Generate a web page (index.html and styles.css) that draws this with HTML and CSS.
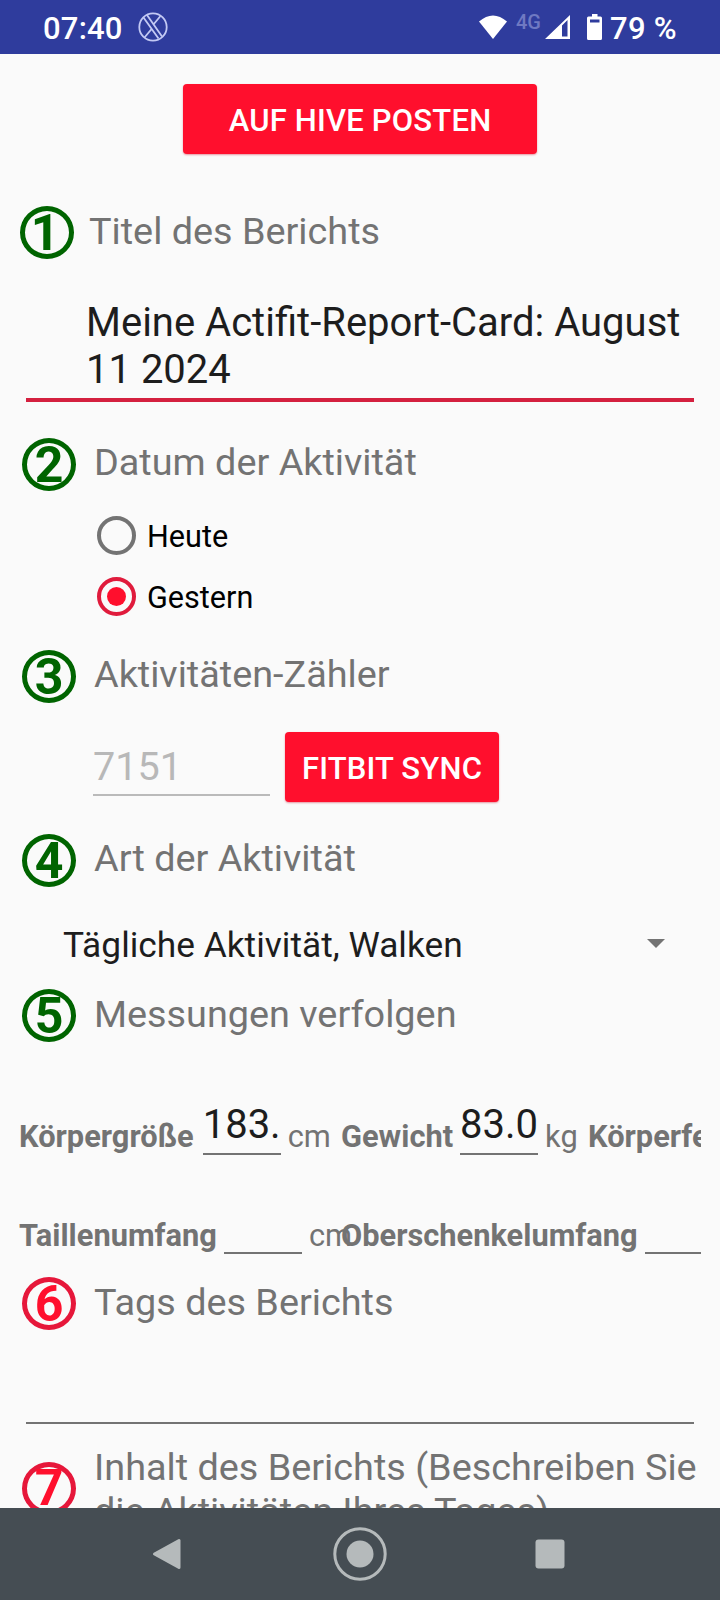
FILE: index.html
```html
<!DOCTYPE html>
<html lang="de">
<head>
    <meta charset="UTF-8">
    <meta name="viewport" content="width=device-width, initial-scale=1.0">
    <title>Actifit</title>
    <link rel="stylesheet" href="styles.css">
</head>
<body>
    <!-- Status bar -->
    <div class="status-bar">
        <span class="clock">07:40</span>
        <svg class="x-icon" width="30" height="30" viewBox="0 0 30 30" fill="none" stroke="#c3c9f4" stroke-width="1.8">
            <circle cx="15" cy="15" r="13.7"/>
            <path d="M5.5 5.5l15 21M9 3l15 21.5M22.5 4l-7.500 9M14 16.500L6.500 25.500"/>
        </svg>
        <svg class="wifi-icon" width="28" height="24" viewBox="0 0 28 24" fill="#fff">
            <path d="M0 6.500Q14-5.500 28 6.500L14 24z"/>
        </svg>
        <span class="network">4G</span>
        <svg class="signal-icon" width="25" height="24" viewBox="0 0 25 24">
            <path fill="#fff" fill-rule="evenodd" d="M0 24L25 0v24zM17 10.500V21.500h5.500V5z"/>
        </svg>
        <svg class="battery-icon" width="15" height="26" viewBox="0 0 15 26">
            <path fill="#fff" fill-rule="evenodd" d="M5 0h5.500v2.500h3q1.500 0 1.500 1.500v20.500q0 1.500-1.500 1.500h-12q-1.500 0-1.500-1.500V4q0-1.500 1.500-1.500H5zM3 5.500v3h9.500v-3z"/>
        </svg>
        <span class="battery">79 %</span>
    </div>

    <!-- Report form -->
    <div class="form">
        <button class="btn post-btn">AUF HIVE POSTEN</button>

        <div class="heading first">
            <span class="step">1</span>
            <span class="label">Titel des Berichts</span>
        </div>
        <div class="title-input">Meine Actifit-Report-Card: August 11 2024</div>

        <div class="heading">
            <span class="step">2</span>
            <span class="label">Datum der Aktivität</span>
        </div>
        <div class="radios">
            <div class="radio"><span class="dot"></span><span class="option">Heute</span></div>
            <div class="radio checked"><span class="dot"></span><span class="option">Gestern</span></div>
        </div>

        <div class="heading">
            <span class="step">3</span>
            <span class="label">Aktivitäten-Zähler</span>
        </div>
        <div class="counter">
            <div class="count-input">7151</div>
            <button class="btn sync-btn">FITBIT SYNC</button>
        </div>

        <div class="heading">
            <span class="step">4</span>
            <span class="label">Art der Aktivität</span>
        </div>
        <div class="spinner">
            <span class="spinner-text">Tägliche Aktivität, Walken</span>
            <span class="arrow"></span>
        </div>

        <div class="heading low">
            <span class="step">5</span>
            <span class="label">Messungen verfolgen</span>
        </div>
        <div class="measures">
            <div class="measure-row">
                <div class="measure height">
                    <b>Körpergröße</b><span class="value">183.</span><span>cm</span>
                </div>
                <div class="measure weight">
                    <b>Gewicht</b><span class="value">83.0</span><span>kg</span>
                </div>
                <div class="measure"><b>Körperfett</b></div>
            </div>
            <div class="measure-row">
                <div class="measure waist">
                    <b>Taillenumfang</b><span class="value"></span><span>cm</span>
                </div>
                <div class="measure">
                    <b>Oberschenkelumfang</b><span class="value"></span>
                </div>
            </div>
        </div>

        <div class="heading low">
            <span class="step red">6</span>
            <span class="label">Tags des Berichts</span>
        </div>
        <div class="tags-input"></div>

        <div class="heading content-heading">
            <span class="step red">7</span>
            <span class="label">Inhalt des Berichts (Beschreiben Sie die Aktivitäten Ihres Tages)</span>
        </div>
    </div>

    <!-- Navigation bar -->
    <div class="nav-bar">
        <svg width="54" height="54" viewBox="0 0 54 54">
            <path fill="#b5babb" stroke="#b5babb" stroke-width="3" stroke-linejoin="round" d="M11.500 27L36 13.500v27z"/>
        </svg>
        <svg width="54" height="54" viewBox="0 0 54 54">
            <circle cx="27" cy="27" r="25.200" fill="none" stroke="#b5babb" stroke-width="3"/>
            <circle cx="27" cy="27" r="13.500" fill="#b5babb"/>
        </svg>
        <svg width="54" height="54" viewBox="0 0 54 54">
            <rect x="12.500" y="12.500" width="29" height="29" rx="3" fill="#b5babb"/>
        </svg>
    </div>
</body>
</html>
```
FILE: styles.css
```css
* { box-sizing: border-box; }
body { margin: 0; height: 1600px; display: flex; flex-direction: column; overflow: hidden; background-color: #fafafa; font-family: Roboto, sans-serif; color: #737373; }

/* Status bar */
.status-bar { height: 54px; flex: none; display: flex; align-items: center; padding: 0 43px; background-color: #2f3c9d; color: #fff; font-size: 31px; font-weight: 500; line-height: 54px; }
.clock { width: 95px; padding-top: 3px; letter-spacing: 0.2px; }
.network { width: 29px; color: #6f79c2; font-size: 20px; line-height: 20px; padding-bottom: 10px; }
.wifi-icon { margin-left: 311px; margin-right: 9px; }
.signal-icon { margin-right: 17px; }
.battery { margin-left: 8px; padding-top: 3px; white-space: nowrap; letter-spacing: 0.3px; }

/* Form */
.form { flex: 1; min-height: 0; overflow: hidden; }
.btn { display: block; height: 70px; padding: 2px 0 0; border: none; border-radius: 4px; background-color: #ff0f2d; color: #fff; font-family: inherit; font-size: 31px; font-weight: 500; letter-spacing: 0.2px; text-align: center; white-space: nowrap; box-shadow: 0 1px 2px rgba(200, 0, 30, 0.4); }
.post-btn { width: 354px; margin: 30px auto 0; }
.sync-btn { width: 214px; }

.heading { display: flex; height: 54px; padding-left: 22px; }
.heading.first { margin-top: 52px; padding-left: 20px; }
.heading.first .label { margin-left: 15px; padding-top: 3px; }
.heading.low .label { padding-top: 3px; }
.step { width: 54px; height: 53px; flex: none; display: flex; align-items: center; justify-content: center; border: 5px solid #006400; border-radius: 50%; color: #006400; font-size: 50px; font-weight: 700; line-height: 44px; }
.heading.first .step { padding-right: 4px; }
.step.red { border-color: #e6173a; color: #ff0f2d; }
.label { margin-left: 18px; padding-top: 2px; font-size: 37.8px; line-height: 44px; }

.title-input { height: 109px; margin: 33px 26px 36px; padding: 6px 0 0 60px; border-bottom: 4px solid #d4203f; color: #1d1d1d; font-size: 40px; line-height: 47px; }

.radios { padding: 13px 0 0 97px; height: 158px; }
.radio { display: flex; align-items: center; height: 61px; color: #000; font-size: 30.6px; }
.dot { width: 39px; height: 39px; margin-right: 11px; border: 4px solid #737373; border-radius: 50%; }
.option { padding-top: 2px; }
.checked .dot { border-color: #e01b3c; padding: 6px; background: #ff0f2d content-box; }

.counter { display: flex; height: 130px; padding: 28px 0 0 93px; }
.count-input { width: 177px; height: 64px; margin-right: 15px; border-bottom: 2px solid #bababa; color: #b8b8b8; font-size: 39.6px; line-height: 69px; }

.spinner { display: flex; align-items: center; height: 101px; padding: 13px 55px 0 63px; color: #1d1d1d; font-size: 35.3px; }
.spinner-text { flex: 1; }
.arrow { margin-bottom: 3px; border: 9px solid transparent; border-top-color: #737373; border-bottom: none; }

/* Measurements */
.measures { height: 234px; margin: 0 19px; padding-top: 48px; overflow: hidden; }
.measure-row { display: flex; height: 99px; }
.measure { flex: none; display: flex; padding-top: 26px; font-size: 30.8px; line-height: 40px; white-space: nowrap; }
.height, .waist { width: 322px; }
.weight { width: 247px; }
.value { flex: none; width: 78px; height: 50px; margin: -12px 7px 0 7px; border-bottom: 2px solid #737373; color: #1d1d1d; font-size: 40px; line-height: 40px; }
.height .value { margin-left: 9px; }

.tags-input { height: 93px; margin: 0 26px 21px; border-bottom: 2px solid #737373; }
.content-heading { height: 88px; align-items: center; }
.content-heading .step { margin-bottom: 2px; }
.content-heading .label { padding: 0; width: 616px; }

/* Navigation bar */
.nav-bar { display: flex; height: 92px; flex: none; align-items: center; justify-content: center; gap: 136px; background-color: #454d53; }
```
